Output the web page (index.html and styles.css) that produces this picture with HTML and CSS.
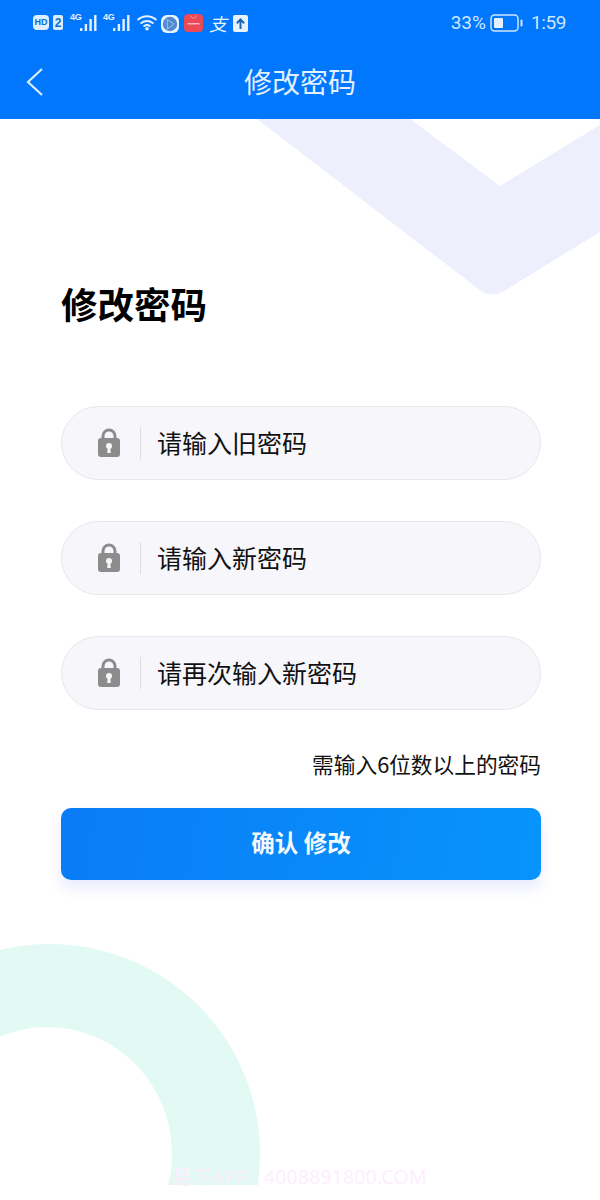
FILE: index.html
```html
<!DOCTYPE html>
<html lang="zh-CN">
<head>
<meta charset="utf-8">
<title>修改密码</title>
<link rel="stylesheet" href="styles.css">
</head>
<body>
<div class="page">
  <svg class="decor" width="600" height="1200" viewBox="0 0 600 1200" aria-hidden="true">
    <path class="decor-v" d="M257 119H410L500 186L600 125V232L504 291Q492 298 481 291Z"/>
    <path class="decor-ring" d="M-160 1154A210 210 0 0 1 260 1154Q260 1170 258 1185H168Q172 1170 172 1154A125 127 0 0 0 -78 1154Z"/>
  </svg>

  <header class="top">
    <div class="status">
      <div class="status-left">
        <span class="badge badge-hd">HD</span>
        <span class="badge badge-sim">2</span>
        <span class="net">
          <span class="net-label">4G</span>
          <svg class="bars" width="17" height="17" viewBox="0 0 17 17"><rect x="0" y="14" width="2.400" height="3" rx="0.500"/><rect x="4.700" y="10" width="2.400" height="7"/><rect x="9.400" y="5" width="2.400" height="12"/><rect x="14.100" y="1" width="2.400" height="16"/></svg>
        </span>
        <span class="net net-2">
          <span class="net-label">4G</span>
          <svg class="bars" width="17" height="17" viewBox="0 0 17 17"><rect x="0" y="14" width="2.400" height="3" rx="0.500"/><rect x="4.700" y="10" width="2.400" height="7"/><rect x="9.400" y="5" width="2.400" height="12"/><rect x="14.100" y="1" width="2.400" height="16"/></svg>
        </span>
        <svg class="wifi" width="20" height="17" viewBox="0 0 20 17"><path d="M1.200 5.500C6 1 14 1 18.800 5.500M4.300 9C7.500 6.200 12.500 6.200 15.700 9M7.200 12C8.800 10.900 11.200 10.900 12.800 12" fill="none" stroke="#e6f2ff" stroke-width="2" stroke-linecap="round"/><circle cx="10" cy="14.800" r="1.800" fill="#e6f2ff"/></svg>
        <svg class="app-globe" width="18" height="18" viewBox="0 0 18 18"><rect width="18" height="18" rx="6" fill="#e8f2fc"/><circle cx="9" cy="9" r="7.200" fill="#4f8ad2"/><path d="M6 4.500L13 9L6.500 14Z" fill="none" stroke="#9cc2ee" stroke-width="1"/></svg>
        <svg class="app-red" width="19" height="18" viewBox="0 0 19 18"><rect width="19" height="18" rx="4" fill="#ea4a56"/><path d="M6.500 1.500C7 5 12 5 12.500 1.500" fill="none" stroke="#f59aa0" stroke-width="1"/><rect x="3.500" y="9" width="12" height="1.500" fill="#f6b5b9"/></svg>
        <span class="alipay">支</span>
        <svg class="upload" width="15" height="17" viewBox="0 0 15 17"><rect width="15" height="17" rx="2" fill="#e8f2fc"/><path d="M7.500 14V5M3.800 8.200L7.500 4.500L11.200 8.200" fill="none" stroke="#1a68b8" stroke-width="2"/></svg>
      </div>
      <div class="status-right">
        <span class="pct">33%</span>
        <svg class="battery" width="33" height="18" viewBox="0 0 33 18"><rect x="1" y="1" width="27" height="16" rx="3.500" fill="none" stroke="#cfe6ff" stroke-width="1.500"/><rect x="4" y="4" width="9" height="10" rx="1" fill="#e4f0fc"/><rect x="30.500" y="5.500" width="2" height="7" rx="1" fill="#cfe6ff"/></svg>
        <span class="time">1:59</span>
      </div>
    </div>
    <div class="nav">
      <svg class="back" width="18" height="30" viewBox="0 0 18 30"><path d="M16 2L2 15L16 28" fill="none" stroke="#dbeeff" stroke-width="2.200"/></svg>
      <h1 class="nav-title">修改密码</h1>
    </div>
  </header>

  <main class="content">
    <h2 class="heading">修改密码</h2>
    <div class="fields">
      <div class="field">
        <svg class="lock" width="24" height="30" viewBox="0 0 24 30"><path d="M6 12V8a6 6 0 0 1 12 0V12" fill="none" stroke="#8c8c8c" stroke-width="3"/><rect x="1" y="10" width="22" height="19" rx="3" fill="#8c8c8c"/><circle cx="12" cy="18" r="3" fill="#f7f7fb"/><path d="M10.800 19H13.200L13.800 25H10.200Z" fill="#f7f7fb"/></svg>
        <span class="sep"></span>
        <span class="label">请输入旧密码</span>
      </div>
      <div class="field">
        <svg class="lock" width="24" height="30" viewBox="0 0 24 30"><path d="M6 12V8a6 6 0 0 1 12 0V12" fill="none" stroke="#8c8c8c" stroke-width="3"/><rect x="1" y="10" width="22" height="19" rx="3" fill="#8c8c8c"/><circle cx="12" cy="18" r="3" fill="#f7f7fb"/><path d="M10.800 19H13.200L13.800 25H10.200Z" fill="#f7f7fb"/></svg>
        <span class="sep"></span>
        <span class="label">请输入新密码</span>
      </div>
      <div class="field">
        <svg class="lock" width="24" height="30" viewBox="0 0 24 30"><path d="M6 12V8a6 6 0 0 1 12 0V12" fill="none" stroke="#8c8c8c" stroke-width="3"/><rect x="1" y="10" width="22" height="19" rx="3" fill="#8c8c8c"/><circle cx="12" cy="18" r="3" fill="#f7f7fb"/><path d="M10.800 19H13.200L13.800 25H10.200Z" fill="#f7f7fb"/></svg>
        <span class="sep"></span>
        <span class="label">请再次输入新密码</span>
      </div>
    </div>
    <p class="hint">需输入6位数以上的密码</p>
    <button class="submit" type="button">确认 修改</button>
  </main>

  <div class="watermark">易下APP · 4008891800.COM</div>
</div>
</body>
</html>
```
FILE: styles.css
```css
* { box-sizing: border-box; }
html, body { margin: 0; padding: 0; }
body {
  width: 600px;
  height: 1200px;
  overflow: hidden;
  background: #fff;
  font-family: "Noto Sans CJK SC", "Noto Sans", sans-serif;
}
.page { position: relative; width: 600px; height: 1200px; overflow: hidden; }
.decor { position: absolute; left: 0; top: 0; }
.decor-v { fill: #eeeffd; }
.decor-ring { fill: #e3faf4; }

.top { position: relative; height: 119px; background: #0077fd; color: #dbeeff; }
.status {
  height: 46px;
  padding: 14px 34px 0 33px;
  display: flex;
  justify-content: space-between;
  align-items: flex-start;
}
.status-left { display: flex; align-items: flex-start; }
.status-right { display: flex; align-items: center; height: 18px; }
.badge {
  display: flex;
  align-items: center;
  justify-content: center;
  height: 15px;
  margin-top: 1px;
  border-radius: 4px;
  background: #dceefe;
  color: #0a6fd8;
  font-family: "Liberation Sans", sans-serif;
  font-size: 12px;
  font-weight: 700;
  line-height: 1;
}
.badge-hd { width: 16px; font-size: 9px; }
.badge-sim { width: 10px; margin-left: 4px; border-radius: 2px; }
.net { position: relative; display: block; width: 27px; height: 17px; margin-left: 7px; }
.net-2 { margin-left: 6px; }
.net-label {
  position: absolute;
  left: 0;
  top: -1px;
  font-family: "Liberation Sans", sans-serif;
  font-size: 9px;
  font-weight: 700;
  line-height: 9px;
  letter-spacing: -0.3px;
  color: #e6f2ff;
}
.bars { position: absolute; right: 0; top: 0; fill: #e6f2ff; }
.wifi { margin-left: 7px; }
.app-globe { margin: 1px 0 0 4px; }
.app-red { margin-left: 5px; }
.alipay {
  width: 20px;
  margin-left: 5px;
  font-size: 18px;
  line-height: 18px;
  font-style: italic;
  color: #e6f2ff;
  text-align: center;
}
.upload { margin: 1px 0 0 5px; }
.pct, .time {
  font-family: "Roboto", sans-serif;
  line-height: 18px;
  color: #cfe6ff;
}
.pct { font-size: 19px; }
.time { font-size: 19px; letter-spacing: -0.400px; }
.battery { margin: 0 8px 0 4px; }

.nav { position: relative; height: 73px; display: flex; align-items: center; justify-content: center; padding-bottom: 4px; }
.back { position: absolute; left: 26px; top: 21px; }
.nav-title { margin: 0; font-size: 28px; font-weight: 400; line-height: 40px; color: #e2f1ff; }

.content { position: relative; padding: 0 59px 0 61px; }
.heading { margin: 160px 0 0; font-size: 36.500px; font-weight: 700; line-height: 50px; color: #000; }
.fields { margin-top: 77px; display: flex; flex-direction: column; gap: 41px; }
.field {
  display: flex;
  align-items: center;
  height: 74px;
  padding-left: 35px;
  border: 1px solid #e8e8ec;
  border-radius: 37px;
  background: #f7f7fb;
}
.lock { flex: none; }
.sep { width: 1px; height: 32px; margin: 0 16px 0 19px; background: #dedee2; }
.label { padding-bottom: 3px; font-size: 25px; line-height: 36px; color: #111; }
.hint { margin: 39px 0 0; font-size: 21.700px; line-height: 30px; color: #111; text-align: right; }
.submit {
  display: block;
  width: 480px;
  height: 72px;
  margin-top: 29px;
  padding: 0 0 4px;
  border: 0;
  border-radius: 10px;
  background: linear-gradient(100deg, #0a7cf6, #0794fc);
  box-shadow: 0 8px 14px rgba(90, 110, 240, 0.14);
  color: #f4faff;
  font-family: inherit;
  font-size: 23.500px;
  font-weight: 700;
}
.watermark {
  position: absolute;
  left: 172px;
  top: 1164px;
  font-family: "Noto Sans", "Noto Sans CJK SC", sans-serif;
  font-size: 19.800px;
  line-height: 26px;
  color: #fdeefd;
  white-space: nowrap;
}
```
